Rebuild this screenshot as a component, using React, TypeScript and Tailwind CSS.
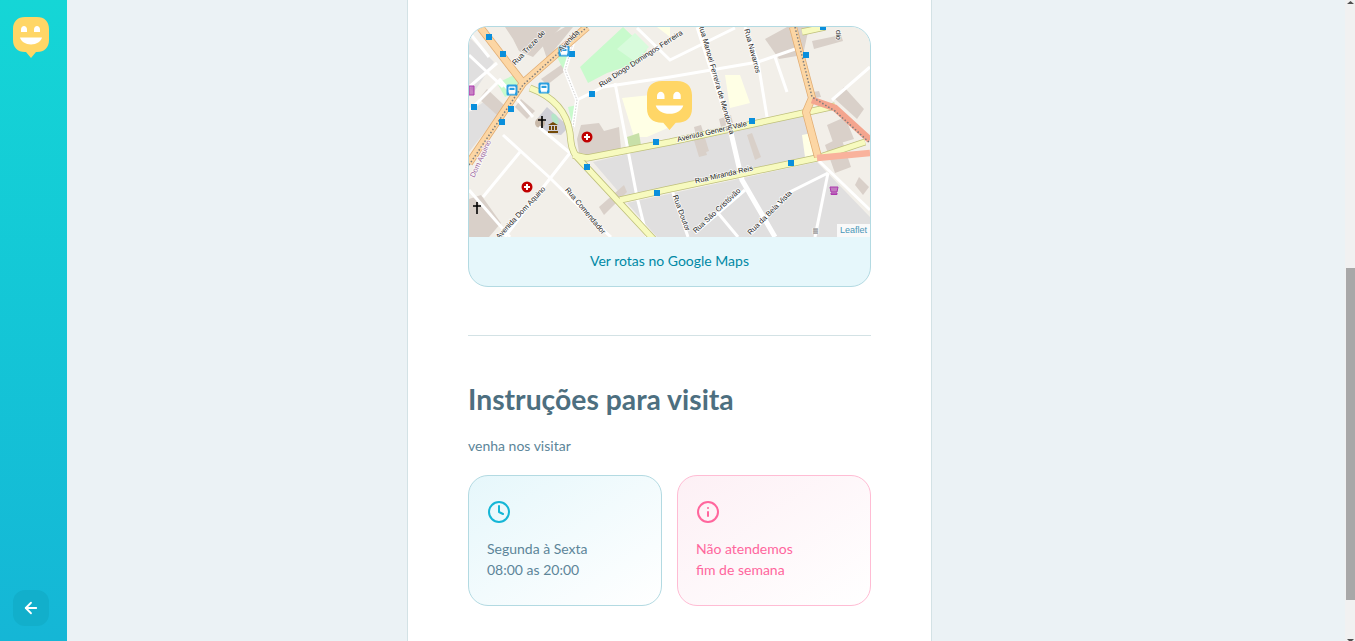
import { ArrowLeft, Clock, Info } from "lucide-react";

function Logo({ className }: { className: string }) {
  return (
    <svg viewBox="0 0 36 41" preserveAspectRatio="none" className={className}>
      <path
        d="M12 0H24C31.5 0 36 4.5 36 12V23C36 30.5 31.5 35 24 35H23L18 41L13 35H12C4.5 35 0 30.5 0 23V12C0 4.5 4.5 0 12 0Z"
        fill="#FFD666"
      />
      <path d="M8 15V12.5C8 10.5 9.5 9 11 9C12.5 9 14 10.5 14 12.5V15Z" fill="#fff" />
      <path d="M21 15V12.5C21 10.5 22.5 9 24 9C25.5 9 27 10.5 27 12.5V15Z" fill="#fff" />
      <path d="M7 20.5H29C28 24.5 23.5 27.5 18 27.5C12.5 27.5 8 24.5 7 20.5Z" fill="#fff" />
    </svg>
  );
}

const whiteRoads = [
  "M34 108L80 150L131 200L142 210",
  "M101 126L54 186L36 210",
  "M51 125L14 170",
  "M0 163L41 210",
  "M0 60L28 36",
  "M1 83L31 53L64 90",
  "M0 28L34 60",
  "M108 73L134 60L201 50L289 35L329 21",
  "M146 56L168 170L178 210",
  "M168 1L201 33L266 1",
  "M289 35L298 90",
  "M306 30L318 65",
  "M276 0L289 35",
  "M349 133L401 183",
  "M359 146L346 210",
  "M359 146L319 166L283 206",
  "M276 163L226 206",
  "M249 186L269 210",
  "M203 163L219 210",
  "M363 73L401 40",
  "M70 100L101 126",
  "M0 5L20 30",
];

const stops = [
  [20, 10], [34, 27], [103, 27], [5, 80], [42, 82], [33, 95], [123, 67], [187, 115],
  [118, 140], [188, 166], [354, 0], [337, 28], [283, 94], [322, 136],
];

const buildings = [
  "M36 0H92L64 30L50 24L44 12Z",
  "M72 14L96 0H104L78 32Z",
  "M72 52L92 38L96 44L78 58Z",
  "M18 62L35 78L28 88L10 72Z",
  "M52 72L66 84L58 92L46 80Z",
  "M108 112L112 98L130 96L135 104L150 100L152 122L125 128L110 126Z",
  "M130 180L155 158L158 165L135 188Z",
  "M112 130L122 120L125 124L118 134Z",
  "M296 12L318 0H340L334 28L310 32Z",
  "M343 14L372 8L374 14L345 22Z",
  "M338 66L350 64L352 70L340 72Z",
  "M250 92L262 88L264 96L252 100Z",
  "M225 100L232 98L240 124L232 127Z",
  "M278 108L283 106L292 130L286 133Z",
  "M224 110L232 108L238 128L230 130Z",
  "M358 98L376 90L385 112L365 118Z",
  "M375 60L395 82L388 92L366 72Z",
  "M356 118L372 110L382 140L366 146Z",
  "M390 150L400 160L394 168L386 158Z",
  "M0 172L12 168L32 196L20 210H0Z",
];

const labels: [string, number, number, number, string?][] = [
  ["Rua Treze de", 60, 21, -47],
  ["Avenida", 100, 14, -47],
  ["Rua Diogo Domingos Ferreira", 172, 32, -33],
  ["Avenida General Vale", 243, 105, -13],
  ["Rua Miranda Reis", 255, 148, -13],
  ["Rua Manoel Ferreira de Mendonça", 247, 52, 74],
  ["Rua Navarros", 283, 24, 75],
  ["Rua Doutor", 212, 186, 70],
  ["Rua São Cristóvão", 248, 184, -43],
  ["Rua da Bela Vista", 301, 186, -45],
  ["Rua Comendador", 116, 184, 50],
  ["Avenida Dom Aquino", 52, 186, -47],
  ["Dom Aquino", 12, 132, -65, "#a06aa0"],
  ["III", 346, 204, 90],
  ["dio", 369, 8, 90],
];

function MapDrawing() {
  return (
    <svg viewBox="0 0 401 210" className="block h-[210px] w-[401px]">
      <rect width="401" height="210" fill="#f2efe9" />

      {/* blocks */}
      <path d="M124 135L339 85L348 128L154 170Z" fill="#e0dfdf" />
      <path d="M158 176L348 135L401 190V210H188Z" fill="#e0dfdf" />
      <path d="M0 10L25 35L5 65L0 60Z" fill="#e0dfdf" />
      <path d="M0 85L22 70L34 82L0 125Z" fill="#e0dfdf" />
      <path d="M111 40L154 0L178 23L168 36L138 46L119 56Z" fill="#c8facc" />
      <path d="M148 22L166 6L180 20L165 34Z" fill="#d8fbdc" />
      <path d="M28 56L45 48L52 62L36 70Z" fill="#c8facc" />
      <path d="M88 30L100 25L97 48Z" fill="#c8facc" />
      <path d="M99 80L108 78L104 100Z" fill="#c8facc" />
      <path d="M153 71L201 66V100L178 110L165 110Z" fill="#ffffe5" />
      <path d="M256 48L271 48L281 76L261 81Z" fill="#ffffe5" />
      <path d="M333 108L343 106L344 128L336 130Z" fill="#ffffe5" />
      <path d="M188 0H201V10Z" fill="#ffffe5" />
      <path d="M158 110L170 106L172 118L160 122Z" fill="#c8e0a8" />
      <path d="M5 195L15 188L24 198L14 206Z" fill="#a8e0c0" />

      {buildings.map((d) => (
        <path key={d} d={d} fill="#d9d0c9" />
      ))}

      {/* church */}
      <path d="M68 92L78 80L100 100L92 108L76 106Z" fill="#cfcfd6" />
      <circle cx="71" cy="96" r="5" fill="#c8b8a8" />
      <ellipse cx="86" cy="92" rx="3" ry="6" fill="#b5e5c8" transform="rotate(-25 86 92)" />

      {whiteRoads.map((d) => (
        <path key={d} d={d} fill="none" stroke="#fff" strokeWidth="3" />
      ))}
      <path d="M229 0L259 93L273 153L306 210" fill="none" stroke="#fff" strokeWidth="5" />
      <path d="M104 16L96 43L108 73L104 100" fill="none" stroke="#fff" strokeWidth="4" />
      <path d="M104 16L96 43L108 73L104 100" fill="none" stroke="#cfcfcf" strokeWidth="1" strokeDasharray="1.5 1.5" />

      {/* yellow roads */}
      <g fill="none" strokeLinejoin="round">
        <g stroke="#bfc07c" strokeWidth="7">
          <path d="M61 61C85 70 98 85 101 106C102 118 103 124 108 130L188 216" />
          <path d="M104 128L118 131L201 115L339 85L366 79" />
          <path d="M151 173L196 163L348 131L396 115" />
          <path d="M333 5L356 0" />
        </g>
        <g stroke="#f7fabf" strokeWidth="5.5">
          <path d="M61 61C85 70 98 85 101 106C102 118 103 124 108 130L188 216" />
          <path d="M104 128L118 131L201 115L339 85L366 79" />
          <path d="M151 173L196 163L348 131L396 115" />
          <path d="M333 5L356 0" />
        </g>
      </g>

      {/* trunk and primary */}
      <g fill="none" strokeLinejoin="round">
        <g stroke="#e2ad73" strokeWidth="8">
          <path d="M0 136L54 56L118 0" />
          <path d="M11 0L54 56" />
          <path d="M324 0L343 71L337 85L349 130" />
        </g>
        <g stroke="#fcd6a4" strokeWidth="6.5">
          <path d="M0 136L54 56L118 0" />
          <path d="M11 0L54 56" />
          <path d="M324 0L343 71L337 85L349 130" />
        </g>
        <path d="M343 73L366 81L401 113" stroke="#f4a58e" strokeWidth="7" />
        <path d="M348 131L401 126" stroke="#f9b29c" strokeWidth="6.5" />
        <g stroke="#7d7d7d" strokeWidth="1.5" strokeDasharray="1.5 2">
          <path d="M0 138L54 58L118 0" />
          <path d="M326 0L343 70L366 84L401 116" />
        </g>
      </g>

      {stops.map(([x, y]) => (
        <rect key={`${x}-${y}`} x={x - 3} y={y - 3} width="6" height="6" fill="#0a8fdc" />
      ))}

      {/* bus stops */}
      {[[95, 24], [43, 63], [75, 61]].map(([x, y]) => (
        <g key={x}>
          <rect x={x - 5.5} y={y - 5.5} width="11" height="11" rx="1.5" fill="#2a9fe0" />
          <rect x={x - 3.5} y={y - 3.5} width="7" height="6.5" rx="1" fill="#fff" />
          <rect x={x - 2.5} y={y - 2.2} width="5" height="2.2" fill="#2a9fe0" />
          <rect x={x - 3} y={y + 3.2} width="6" height="1" fill="#fff" />
        </g>
      ))}

      {[[118, 110], [58, 160]].map(([x, y]) => (
        <g key={x}>
          <circle cx={x} cy={y} r="5.5" fill="#c00000" />
          <path d={`M${x - 3} ${y}H${x + 3}M${x} ${y - 3}V${y + 3}`} stroke="#fff" strokeWidth="2" />
        </g>
      ))}

      {[[73, 95], [8, 181]].map(([x, y]) => (
        <path key={x} d={`M${x} ${y - 6}V${y + 6}M${x - 4} ${y - 2}H${x + 4}`} stroke="#000" strokeWidth="1.6" />
      ))}

      {/* museum */}
      <path d="M79 106V104H89V106ZM80 103V99H82V103ZM83 103V99H85V103ZM86 103V99H88V103ZM79 98L84 95L89 98Z" fill="#734a08" />

      {/* shops */}
      <path d="M361 160H369L368 165H362ZM362 166H368V167.5H362Z" fill="#ac39ac" fillOpacity="0.6" stroke="#ac39ac" strokeWidth="1" />
      <path d="M0 59H5V68H0Z" fill="#ac39ac" fillOpacity="0.6" stroke="#ac39ac" strokeWidth="1" />

      {labels.map(([text, x, y, angle, color]) => (
        <text
          key={text}
          x={x}
          y={y}
          textAnchor="middle"
          dominantBaseline="middle"
          transform={`rotate(${angle} ${x} ${y})`}
          fontSize="7.4"
          fill={color ?? "#222"}
          stroke="#ffffff"
          strokeOpacity="0.75"
          strokeWidth="1.6"
          paintOrder="stroke"
          className="font-['Liberation_Sans',sans-serif]"
        >
          {text}
        </text>
      ))}
    </svg>
  );
}

export default function App() {
  return (
    <div className="flex h-[641px] w-full overflow-hidden bg-[#ebf2f5] font-['Lato',sans-serif]">
      {/* Sidebar */}
      <aside className="flex h-full w-[67px] shrink-0 flex-col items-start justify-between bg-gradient-to-b from-[#15d6d6] to-[#15b6d6] pb-[15px] pl-[13px] pt-[17px]">
        <Logo className="h-[41px] w-[36px]" />
        <button
          type="button"
          className="flex h-[36px] w-[36px] items-center justify-center rounded-[12px] bg-[#12afcb] text-white"
        >
          <ArrowLeft size={18} strokeWidth={2.4} />
        </button>
      </aside>

      {/* Page */}
      <main className="flex-1 pl-[340px]">
        <div className="h-full w-[525px] border-x border-[#d3e2e5] bg-white px-[60px] pt-[26px]">
          <div className="overflow-hidden rounded-[20px] border border-[#b3dae2] bg-[#e6f7fb]">
            <div className="relative h-[210px]">
              <MapDrawing />
              <Logo className="absolute left-[178px] top-[54px] h-[49px] w-[45px]" />
              <span className="absolute bottom-0 right-0 flex h-[13px] items-center bg-white/80 px-[3px] font-['Liberation_Sans',sans-serif] text-[9px] leading-none text-[#4a97b8]">
                Leaflet
              </span>
            </div>
            <div className="flex h-[49px] items-center justify-center pb-[2px] text-[14px] text-[#0089a5]">
              Ver rotas no Google Maps
            </div>
          </div>

          <hr className="mt-[48px] border-[#d3e2e5]" />

          <h2 className="mt-[43px] text-[28.3px] font-bold leading-[40px] text-[#4d6f80]">
            Instruções para visita
          </h2>
          <p className="mt-[15px] text-[14px] leading-[24px] text-[#5c8599]">venha nos visitar</p>

          <div className="mt-[17px] grid grid-cols-2 gap-[15px]">
            <div className="h-[131px] rounded-[20px] border border-[#b3dae2] bg-gradient-to-br from-[#e6f7fb] to-white px-[18px] pt-[24px] text-[14px] leading-[21px] text-[#5c8599]">
              <Clock size={24} className="text-[#15b6d6]" />
              <p className="mt-[14px]">
                Segunda à Sexta
                <br />
                08:00 as 20:00
              </p>
            </div>
            <div className="h-[131px] rounded-[20px] border border-[#ffbcd4] bg-gradient-to-br from-[#fdf0f5] to-white px-[18px] pt-[24px] text-[14px] leading-[21px] text-[#ff669d]">
              <Info size={24} className="text-[#ff669d]" />
              <p className="mt-[14px]">
                Não atendemos
                <br />
                fim de semana
              </p>
            </div>
          </div>
        </div>
      </main>

      {/* Scrollbar */}
      <div className="flex h-full w-[10px] shrink-0 flex-col bg-[#f1f1f1] pl-px">
        <svg viewBox="0 0 9 3" className="mt-px h-[3px] w-[9px]">
          <path d="M4.5 0L8 3H1Z" fill="#505050" />
        </svg>
        <div className="mt-[264px] h-[332px] bg-[#a8a8a8]" />
        <svg viewBox="0 0 9 2" className="mt-auto h-[2px] w-[9px]">
          <path d="M1 0H8L6 2H3Z" fill="#505050" />
        </svg>
      </div>
    </div>
  );
}
